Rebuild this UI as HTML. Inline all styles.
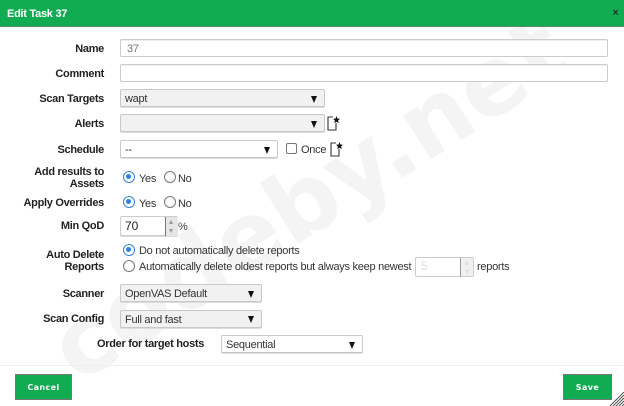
<!DOCTYPE html>
<html><head><meta charset="utf-8">
<style>
html,body{margin:0;padding:0;width:624px;height:406px;overflow:hidden;background:#fff;font-family:"Liberation Sans",sans-serif;font-size:11px;color:#222}
div,span{position:absolute;box-sizing:border-box;white-space:nowrap}
.hdr{left:0;top:0;width:624px;height:27px;background:#11ab51;border-bottom:1px solid #5c8a6e}
.ttl{left:7px;top:6.500px;color:#fff;font:bold 11px/14px "Liberation Sans",sans-serif;letter-spacing:-.27px}
.x{left:612px;top:7px;color:#222;font:bold 8.5px/13px "DejaVu Sans",sans-serif}
.wm{left:0;top:0;font:bold 95px/95px "DejaVu Sans",sans-serif;color:#f4f4f4;transform-origin:0 0;transform:translate(35px,318px) rotate(-32.5deg)}
.l{right:520px;margin-top:1px;font-weight:bold;font-size:11px;letter-spacing:-.3px;line-height:16px;color:#222;text-align:right}
.i{left:120px;width:488px;height:18px;border:1px solid #ccc;background:#fff;border-radius:2px;box-shadow:inset 0 1px 0 #eee;padding-left:6px;font-size:11px;letter-spacing:-.27px;line-height:18px;color:#777}
.s{height:18px;border:1px solid #c8c8c8;border-radius:2px;background:#f1f1f1;padding-left:4px;font-size:11px;letter-spacing:-.27px;line-height:18px;color:#333;box-shadow:0 1px 0 #ddd}
.s.w{background:#fff}
.s b{position:absolute;right:7.500px;top:5.500px;width:0;height:0;border-left:3.500px solid transparent;border-right:3.500px solid transparent;border-top:7px solid #111}
.t{font-size:11px;letter-spacing:-.27px;line-height:15px;color:#333;margin-top:1.500px}
.r{width:12px;height:12px;border:1.3px solid #777;border-radius:50%;background:#fff}
.r.on{border:1.4px solid #2f80e8}
.r.on:after{content:"";position:absolute;left:2px;top:2px;width:5.4px;height:5.4px;border-radius:50%;background:#2f80e8}
.n{border:1px solid #ccc;border-radius:2px;background:#fff}
.btn{top:374px;height:26px;background:#11ab51;border:1px solid #777;color:#fff;font:bold 8px/25px "DejaVu Sans",sans-serif;letter-spacing:.4px;text-align:center}
svg{position:absolute}
</style></head><body>
<div class="wm">codeby.net</div>
<div class="hdr"></div>
<div class="ttl">Edit Task 37</div>
<div class="x">×</div>

<div class="l" style="top:39.500px">Name</div>
<div class="i" style="top:38.5px;color:#777">37</div>
<div class="l" style="top:64.500px">Comment</div>
<div class="i" style="top:63.500px"></div>
<div class="l" style="top:90px">Scan Targets</div>
<div class="s" style="left:120px;top:89px;width:205px">wapt<b></b></div>
<div class="l" style="top:115px">Alerts</div>
<div class="s" style="left:120px;top:114px;width:205px"><b></b></div>
<svg style="left:326px;top:115px" width="15" height="17" viewBox="0 0 15 17"><path d="M7 2H2v13h8V8" fill="none" stroke="#333" stroke-width="1.1"/><path d="M10.500 1l1 2.600 2.500.2-1.900 1.700.6 2.600-2.200-1.400-2.200 1.400.6-2.600L7 3.800l2.500-.2z" fill="#111"/></svg>

<div class="l" style="top:141px">Schedule</div>
<div class="s w" style="left:120px;top:140px;width:158px">--<b></b></div>
<div style="left:286px;top:143px;width:11px;height:11px;border:1.2px solid #777;border-radius:2px;background:#fff"></div>
<div class="t" style="left:301px;top:141px">Once</div>
<svg style="left:329px;top:141px" width="15" height="17" viewBox="0 0 15 17"><path d="M7 2H2v13h8V8" fill="none" stroke="#333" stroke-width="1.1"/><path d="M10.500 1l1 2.600 2.500.2-1.900 1.700.6 2.600-2.200-1.400-2.200 1.400.6-2.600L7 3.800l2.500-.2z" fill="#111"/></svg>

<div class="l" style="top:163px">Add results to</div>
<div class="l" style="top:175px">Assets</div>
<div class="r on" style="left:123px;top:171px"></div><div class="t" style="left:139px;top:170px">Yes</div>
<div class="r" style="left:164px;top:171px"></div><div class="t" style="left:178px;top:170px">No</div>

<div class="l" style="top:194px">Apply Overrides</div>
<div class="r on" style="left:123px;top:196px"></div><div class="t" style="left:139px;top:195px">Yes</div>
<div class="r" style="left:164px;top:196px"></div><div class="t" style="left:178px;top:195px">No</div>

<div class="l" style="top:217px">Min QoD</div>
<div class="n" style="left:120px;top:216px;width:58px;height:20px;box-shadow:0 1px 0 #ddd"></div>
<div style="left:125px;top:218px;font-size:12px;line-height:16px;color:#222">70</div>
<div style="left:164.500px;top:217px;width:1px;height:19px;background:#777"></div>
<div style="left:165.500px;top:217px;width:12px;height:19px;background:#e6e6e6"></div>
<div style="left:169px;top:220px;width:0;height:0;border-left:2.500px solid transparent;border-right:2.500px solid transparent;border-bottom:4px solid #999"></div>
<div style="left:169px;top:229px;width:0;height:0;border-left:2.500px solid transparent;border-right:2.500px solid transparent;border-top:4px solid #999"></div>
<div class="t" style="left:178px;top:218px;color:#444">%</div>

<div class="l" style="top:246px">Auto Delete</div>
<div class="l" style="top:258px">Reports</div>
<div class="r on" style="left:123px;top:244px"></div>
<div class="t" style="left:139px;top:242px">Do not automatically delete reports</div>
<div class="r" style="left:123px;top:260px"></div>
<div class="t" style="left:139px;top:258.500px">Automatically delete oldest reports but always keep newest</div>
<div class="n" style="left:415px;top:257px;width:59px;height:20px"></div>
<div style="left:421px;top:259px;font-size:12px;line-height:15px;color:#ddd">5</div>
<div style="left:460px;top:258px;width:1px;height:19px;background:#999"></div>
<div style="left:461px;top:258px;width:12px;height:18px;background:#f1f1f1"></div>
<div style="left:465px;top:261px;width:0;height:0;border-left:2.500px solid transparent;border-right:2.500px solid transparent;border-bottom:4px solid #ddd"></div>
<div style="left:465px;top:270px;width:0;height:0;border-left:2.500px solid transparent;border-right:2.500px solid transparent;border-top:4px solid #ddd"></div>
<div class="t" style="left:477px;top:258.500px">reports</div>

<div class="l" style="top:285px">Scanner</div>
<div class="s" style="left:120px;top:284px;width:142px">OpenVAS Default<b></b></div>
<div class="l" style="top:310px">Scan Config</div>
<div class="s" style="left:120px;top:309.500px;width:142px">Full and fast<b></b></div>
<div style="left:97px;top:336px;font-weight:bold;font-size:11px;letter-spacing:-.3px;line-height:16px;color:#222">Order for target hosts</div>
<div class="s w" style="left:221px;top:335px;width:142px">Sequential<b></b></div>

<div style="left:0;top:365px;width:624px;height:1px;background:#eee"></div>
<div class="btn" style="left:15px;width:57px">Cancel</div>
<div class="btn" style="left:563px;width:49px">Save</div>
<svg style="left:610px;top:392px" width="14" height="14" viewBox="0 0 14 14"><path d="M0 14L14 0M3 14L14 3M6 14L14 6M9 14L14 9M12 14L14 12" stroke="#555" stroke-width="1"/></svg>
</body></html>
